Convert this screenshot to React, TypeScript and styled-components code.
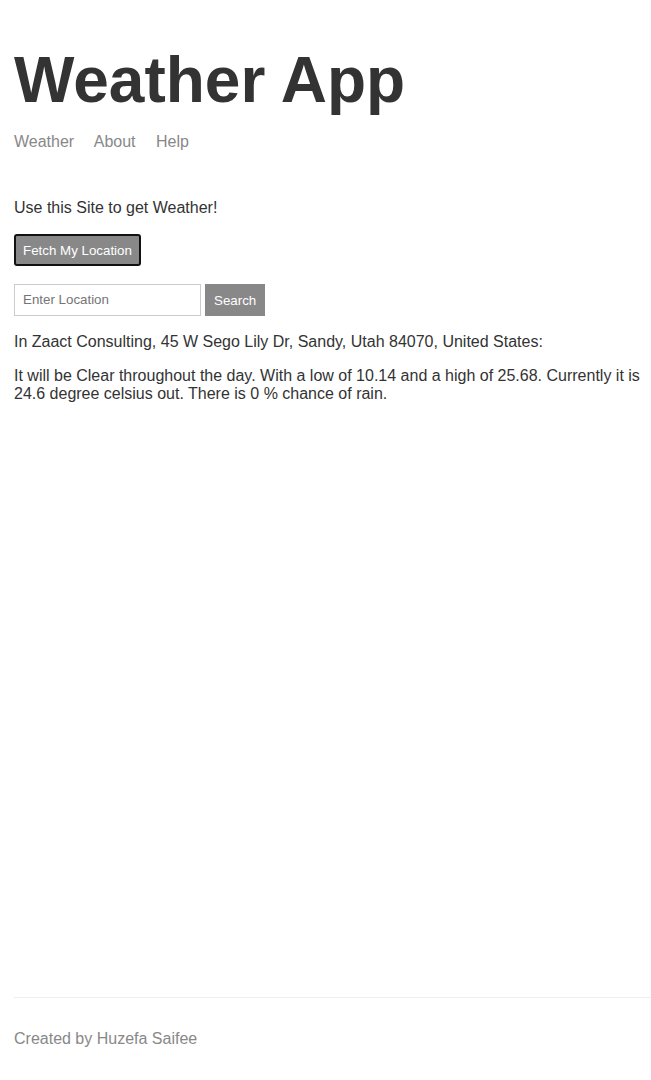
import React from "react";
import styled, { createGlobalStyle } from "styled-components";

const GlobalStyle = createGlobalStyle`
  html, body { margin: 0; padding: 0; }
  body {
    color: #333333;
    font-family: "Liberation Sans", Arial, sans-serif;
  }
`;

const Page = styled.div`
  display: flex;
  flex-direction: column;
  min-height: 100vh;
  padding: 0 0 0 14px;
  box-sizing: border-box;
`;

const Main = styled.div`
  flex-grow: 1;
`;

const Header = styled.header`
  margin-top: 16px;
  margin-bottom: 48px;
`;

const Title = styled.h1`
  font-size: 64px;
  font-weight: bold;
  margin: 42.88px 0 16px;
`;

const Nav = styled.nav`
  font-size: 16px;
`;

const NavLink = styled.a`
  color: #888888;
  margin-right: 16px;
  text-decoration: none;
`;

const Text = styled.p`
  font-size: 16px;
  margin: 16px 0;
`;

const Button = styled.button<{ $focused?: boolean }>`
  font-family: "Liberation Sans", Arial, sans-serif;
  font-size: 13.333px;
  cursor: pointer;
  border: 1px solid #888888;
  background: #888888;
  color: white;
  padding: 8px;
  box-sizing: border-box;
  height: 32px;
  ${(p) =>
    p.$focused &&
    `
    border: 2px solid #111111;
    border-radius: 3px;
    padding: 7px;
  `}
`;

const ButtonRow = styled.div`
  margin: 17px 0 18px;
  height: 32px;
`;

const Form = styled.form`
  display: flex;
  gap: 4px;
  align-items: stretch;
  height: 32px;
  margin-bottom: 17px;
`;

const Input = styled.input`
  font-family: "Liberation Sans", Arial, sans-serif;
  font-size: 13.333px;
  border: 1px solid #cccccc;
  padding: 8px;
  width: 187px;
  box-sizing: border-box;
  color: #333;
  &::placeholder { color: #757575; }
`;

const Footer = styled.footer`
  color: #888888;
  border-top: 1px solid #eeeeee;
  margin-top: 16px;
  padding: 16px 0;
  font-size: 16px;
`;

export default function App() {
  return (
    <>
      <GlobalStyle />
      <Page>
        <Main>
          <Header>
            <Title>Weather App</Title>
            <Nav>
              <NavLink href="#">Weather</NavLink>{" "}
              <NavLink href="#">About</NavLink>{" "}
              <NavLink href="#">Help</NavLink>
            </Nav>
          </Header>
          <Text>Use this Site to get Weather!</Text>
          <ButtonRow>
            <Button $focused>Fetch My Location</Button>
          </ButtonRow>
          <Form onSubmit={(e) => e.preventDefault()}>
            <Input placeholder="Enter Location" />
            <Button type="submit">Search</Button>
          </Form>
          <Text>In Zaact Consulting, 45 W Sego Lily Dr, Sandy, Utah 84070, United States:</Text>
          <Text>
            It will be Clear throughout the day. With a low of 10.14 and a high of 25.68. Currently it is 24.6 degree celsius out. There is 0 % chance of rain.
          </Text>
        </Main>
        <Footer>
          <Text>Created by Huzefa Saifee</Text>
        </Footer>
      </Page>
    </>
  );
}
